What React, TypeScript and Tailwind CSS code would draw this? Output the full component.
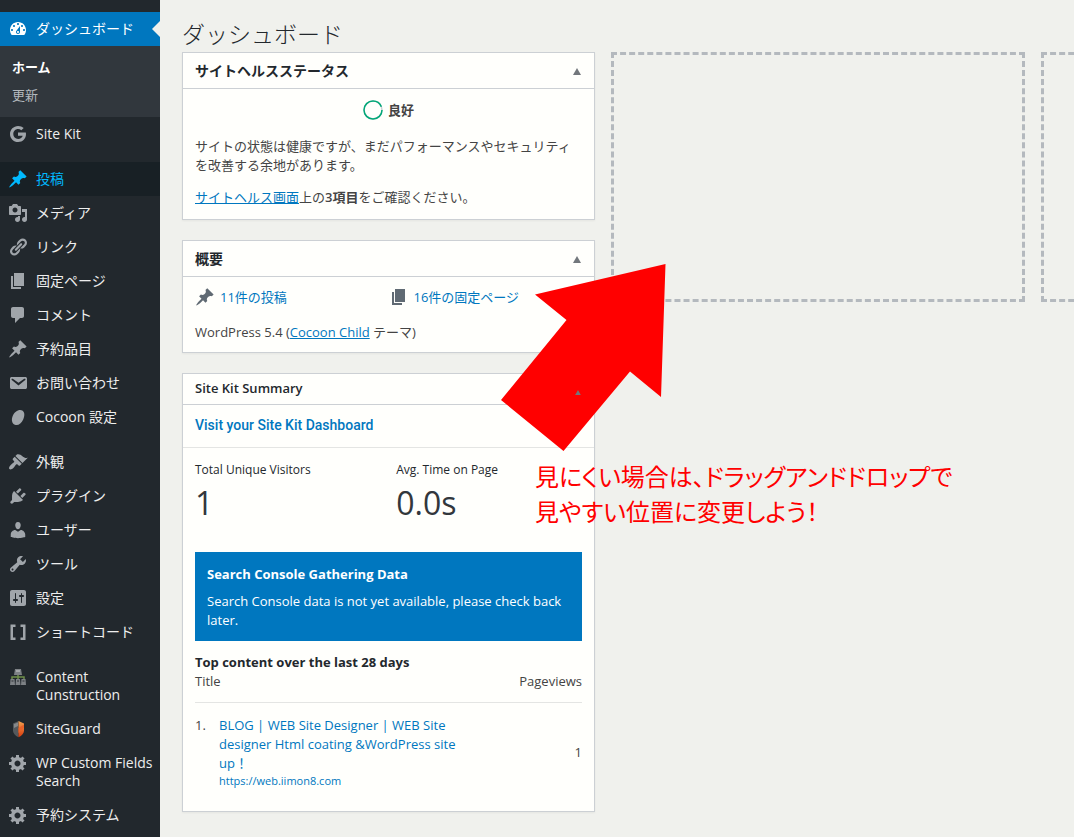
import type { ReactNode } from 'react';
import clsx from 'clsx';

const ICONS = {
  dashboard:
    'M3.76 16h12.48c1.1-1.37 1.76-3.11 1.76-5 0-4.42-3.58-8-8-8s-8 3.58-8 8c0 1.89.66 3.63 1.76 5zM10 4c.55 0 1 .45 1 1s-.45 1-1 1-1-.45-1-1 .45-1 1-1zM6 6c.55 0 1 .45 1 1s-.45 1-1 1-1-.45-1-1 .45-1 1-1zm8 0c.55 0 1 .45 1 1s-.45 1-1 1-1-.45-1-1 .45-1 1-1zm-5.37 5.55L12 7v6c0 1.1-.9 2-2 2s-2-.9-2-2c0-.57.24-1.08.63-1.45zM4 10c.55 0 1 .45 1 1s-.45 1-1 1-1-.45-1-1 .45-1 1-1zm12 0c.55 0 1 .45 1 1s-.45 1-1 1-1-.45-1-1 .45-1 1-1zm-5 3c0-.55-.45-1-1-1s-1 .45-1 1 .45 1 1 1 1-.45 1-1z',
  google:
    'M10 8.4v3.3h4.7c-.5 2-2.3 3.2-4.6 3.2-2.7 0-4.8-2.2-4.8-4.9s2.1-4.9 4.8-4.9c1.2 0 2.3.4 3.2 1.2l2.4-2.4C14.2 2.6 12.3 1.9 10.1 1.9 5.6 1.9 2 5.5 2 10s3.6 8.1 8.1 8.1c4.7 0 7.9-3.3 7.9-8 0-.6-.1-1.1-.2-1.7H10z',
  post: 'M10.44 3.02l1.82-1.82 6.36 6.35-1.83 1.82c-1.05-.68-2.48-.57-3.41.36l-.75.75c-.92.93-1.04 2.35-.35 3.41l-1.83 1.82-2.41-2.41-2.8 2.79c-.42.42-3.38 2.71-3.8 2.29s1.86-3.39 2.28-3.81l2.79-2.79L4.1 9.36l1.83-1.82c1.05.69 2.48.57 3.4-.36l.75-.75c.93-.92 1.05-2.35.36-3.41z',
  media:
    'M13 11V4c0-.55-.45-1-1-1h-1.67L9 1H5L3.67 3H2c-.55 0-1 .45-1 1v7c0 .55.45 1 1 1h10c.55 0 1-.45 1-1zM7 4.5c1.38 0 2.5 1.12 2.5 2.5S8.38 9.5 7 9.5 4.5 8.38 4.5 7 5.62 4.5 7 4.5zM14 6h5v10.5c0 1.38-1.12 2.5-2.5 2.5S14 17.88 14 16.5s1.12-2.5 2.5-2.5c.17 0 .34.02.5.05V9h-3V6zm-4 8.05V13h2v3.5c0 1.38-1.12 2.5-2.5 2.5S7 17.88 7 16.5 8.12 14 9.5 14c.17 0 .34.02.5.05z',
  links:
    'M17.74 2.76c1.68 1.69 1.68 4.41 0 6.1l-1.53 1.52c-1.12 1.12-2.7 1.47-4.14 1.09l2.62-2.61.76-.77.76-.76c.84-.84.84-2.2 0-3.04-.84-.85-2.2-.85-3.04 0l-.77.76-3.38 3.38c-.37-1.44-.02-3.02 1.1-4.14l1.52-1.53c1.69-1.68 4.42-1.68 6.1 0zM8.59 13.43l5.34-5.34c.42-.42.42-1.1 0-1.52-.44-.43-1.13-.39-1.53 0l-5.33 5.34c-.42.42-.42 1.1 0 1.52.44.43 1.13.39 1.52 0zm-.76 2.29l4.14-4.15c.38 1.44.03 3.02-1.09 4.14l-1.52 1.53c-1.69 1.68-4.41 1.68-6.1 0-1.68-1.68-1.68-4.42 0-6.1l1.53-1.52c1.12-1.12 2.7-1.47 4.14-1.1l-4.14 4.15c-.85.84-.85 2.2 0 3.05.84.84 2.2.84 3.04 0z',
  page: 'M6 15V2h10v13H6zm-1 1h8v2H3V5h2v11z',
  comments: 'M5 2h9c1.1 0 2 .9 2 2v7c0 1.1-.9 2-2 2h-2l-5 5v-5H5c-1.1 0-2-.9-2-2V4c0-1.1.9-2 2-2z',
  email:
    'M3.87 4h13.25C18.37 4 19 4.59 19 5.79v8.42c0 1.19-.63 1.79-1.88 1.79H3.87c-1.25 0-1.88-.6-1.88-1.79V5.79c0-1.2.63-1.79 1.88-1.79zm6.62 8.6l6.74-5.53c.24-.2.43-.66.13-1.07-.29-.41-.82-.42-1.17-.17l-5.7 3.86L4.8 5.83c-.35-.25-.88-.24-1.17.17-.3.41-.11.87.13 1.07z',
  cocoon: 'M14.3 3.6c2.4 1.4 2.7 5 .9 8.9-1.8 4.2-5.3 6.5-8.3 5.3-3-1.2-3.8-5-2.2-8.8 1.7-4.2 6.4-7.2 9.6-5.4z',
  appearance:
    'M14.48 11.06L7.41 3.99l1.5-1.5c.5-.56 2.3-.47 3.51.32 1.21.8 1.43 1.28 2.91 2.1 1.18.64 2.45 1.26 4.45.85zm-.71.71L6.7 4.7 4.93 6.47c-.39.39-.39 1.02 0 1.41l1.06 1.06c.39.39.39 1.03 0 1.42-.6.6-1.43 1.11-2.21 1.69-.35.26-.7.53-1.01.84C1.43 14.23.4 16.08 1.4 17.07c.99 1 2.84-.03 4.18-1.36.31-.31.58-.66.85-1.02.57-.78 1.08-1.61 1.69-2.21.39-.39 1.02-.39 1.41 0l1.06 1.06c.39.39 1.02.39 1.41 0z',
  plugins:
    'M13.11 4.36L9.87 7.6 8 5.73l3.24-3.24c.35-.34 1.05-.2 1.56.32.52.51.66 1.21.31 1.55zm-8 1.77l.91-1.12 9.01 9.01-1.19.84c-.71.71-2.63 1.16-3.82 1.16H6.14L4.9 17.26c-.59.59-1.54.59-2.12 0-.59-.58-.59-1.53 0-2.12l1.24-1.24v-3.88c0-1.13.4-3.19 1.09-3.89zm7.26 3.97l3.24-3.24c.34-.35 1.04-.21 1.55.31.52.51.66 1.21.31 1.55l-3.24 3.25z',
  users:
    'M10 9.25c-2.27 0-2.73-3.44-2.73-3.44C7 4.02 7.82 2 9.97 2c2.16 0 2.98 2.02 2.71 3.81 0 0-.41 3.44-2.68 3.44zm0 2.57L12.72 10c2.39 0 4.52 2.33 4.52 4.53v2.49s-3.65 1.13-7.24 1.13c-3.65 0-7.24-1.13-7.24-1.13v-2.49c0-2.25 1.94-4.48 4.47-4.48z',
  tools:
    'M16.68 9.77c-1.34 1.34-3.3 1.67-4.95.99l-5.41 6.52c-.99.99-2.59.99-3.58 0s-.99-2.59 0-3.57l6.52-5.42c-.68-1.65-.35-3.61.99-4.95 1.28-1.28 3.12-1.62 4.72-1.06l-2.89 2.89 2.82 2.82 2.86-2.87c.53 1.58.18 3.39-1.08 4.65zM3.81 16.21c.4.39 1.04.39 1.43 0 .4-.4.4-1.04 0-1.43-.39-.4-1.03-.4-1.43 0-.39.39-.39 1.03 0 1.43z',
  settings:
    'M18 16V4c0-1.1-.9-2-2-2H4c-1.1 0-2 .9-2 2v12c0 1.1.9 2 2 2h12c1.1 0 2-.9 2-2zM8 11h1c.55 0 1 .45 1 1s-.45 1-1 1H8v1.5c0 .28-.22.5-.5.5s-.5-.22-.5-.5V13H6c-.55 0-1-.45-1-1s.45-1 1-1h1V5.5c0-.28.22-.5.5-.5s.5.22.5.5V11zm5-2h-1c-.55 0-1-.45-1-1s.45-1 1-1h1V5.5c0-.28.22-.5.5-.5s.5.22.5.5V7h1c.55 0 1 .45 1 1s-.45 1-1 1h-1v5.5c0 .28-.22.5-.5.5s-.5-.22-.5-.5V9z',
  shortcode: 'M2.5 2.5h5V5H5v10.5h2.500V18h-5zM12.500 2.500h5V18h-5v-2.500H15V5h-2.500z',
  generic:
    'M18 12h-2.18c-.17.7-.44 1.35-.81 1.93l1.54 1.54-2.1 2.1-1.54-1.54c-.58.36-1.23.63-1.91.79V19H8v-2.18c-.68-.16-1.33-.43-1.91-.79l-1.54 1.54-2.12-2.12 1.54-1.54c-.36-.58-.63-1.23-.79-1.91H1V9.03h2.17c.16-.7.44-1.35.8-1.94L2.43 5.55l2.1-2.1 1.54 1.54c.58-.37 1.24-.64 1.93-.81V2h3v2.18c.68.16 1.33.43 1.91.79l1.54-1.54 2.12 2.12-1.54 1.54c.36.59.64 1.24.8 1.94H18V12zm-8.5 1.5c1.66 0 3-1.34 3-3s-1.34-3-3-3-3 1.34-3 3 1.34 3 3 3z',
};

type IconName = keyof typeof ICONS;

function Icon({ name, className }: { name: IconName; className?: string }) {
  return (
    <svg viewBox="0 0 20 20" className={clsx('h-5 w-5 shrink-0', className)} fill="currentColor" fillRule="evenodd" aria-hidden="true">
      <path d={ICONS[name]} />
    </svg>
  );
}

function SitemapIcon() {
  return (
    <svg viewBox="0 0 20 20" className="h-5 w-5 shrink-0" aria-hidden="true">
      <path d="M7 2h6l1 6H6z" fill="#7d8185" />
      <path d="M8 3h4v2H8z" fill="#a5a8aa" />
      <path d="M10 8v4M4 13v-3h12v3" fill="none" stroke="#6f8f4a" strokeWidth="1.5" />
      <path d="M2.5 12h4L7 18H2zM8 12h4l.5 6h-5zM13.5 12h4l.5 6h-5z" fill="#7d8185" />
      <path d="M3.5 13h2v2h-2zM9 13h2v2H9zM14.5 13h2v2h-2z" fill="#55595d" />
    </svg>
  );
}

function ShieldIcon() {
  return (
    <svg viewBox="0 0 20 20" className="h-5 w-5 shrink-0" aria-hidden="true">
      <defs>
        <linearGradient id="shieldRight" x1="0" y1="0" x2="0" y2="1">
          <stop offset="0" stopColor="#f0a050" />
          <stop offset="1" stopColor="#d93a0c" />
        </linearGradient>
      </defs>
      <path d="M10.5 2L5 4.5v7c0 3 2 5 5.500 6.800z" fill="#55595c" />
      <path d="M10 3.5L6 5v4l4-2z" fill="#85888a" />
      <path d="M10.5 2L16 4.5v7c0 3-2 5-5.500 6.800z" fill="url(#shieldRight)" />
      <path d="M10.5 9L16 5.500v3L10.500 14z" fill="#e8632a" />
    </svg>
  );
}

interface MenuItem {
  label: string;
  icon: ReactNode;
  active?: boolean;
}

const MENU_GROUPS: MenuItem[][] = [
  [{ label: 'Site Kit', icon: <Icon name="google" /> }],
  [
    { label: '投稿', icon: <Icon name="post" />, active: true },
    { label: 'メディア', icon: <Icon name="media" /> },
    { label: 'リンク', icon: <Icon name="links" /> },
    { label: '固定ページ', icon: <Icon name="page" /> },
    { label: 'コメント', icon: <Icon name="comments" /> },
    { label: '予約品目', icon: <Icon name="post" /> },
    { label: 'お問い合わせ', icon: <Icon name="email" /> },
    { label: 'Cocoon 設定', icon: <Icon name="cocoon" /> },
  ],
  [
    { label: '外観', icon: <Icon name="appearance" /> },
    { label: 'プラグイン', icon: <Icon name="plugins" /> },
    { label: 'ユーザー', icon: <Icon name="users" /> },
    { label: 'ツール', icon: <Icon name="tools" /> },
    { label: '設定', icon: <Icon name="settings" /> },
    { label: 'ショートコード', icon: <Icon name="shortcode" /> },
  ],
  [
    { label: 'Content Cunstruction', icon: <SitemapIcon /> },
    { label: 'SiteGuard', icon: <ShieldIcon /> },
    { label: 'WP Custom Fields Search', icon: <Icon name="generic" /> },
    { label: '予約システム', icon: <Icon name="generic" /> },
  ],
];

function Sidebar() {
  return (
    <nav className="w-40 shrink-0 bg-[#22282d] pt-3 text-sm leading-[18px] text-[#eeeeee]">
      <a href="#dashboard" className="relative flex items-start gap-2 bg-[#0077bf] py-2 pl-2 text-white">
        <Icon name="dashboard" className="-my-px" />
        ダッシュボード
        <svg viewBox="0 0 8 16" className="absolute top-[9px] right-0 h-4 w-2" aria-hidden="true">
          <path d="M8 0v16L0 8z" fill="#f0f1ed" />
        </svg>
      </a>
      <ul className="bg-[#31373d] pt-[7px] pb-2 text-[13px]">
        <li>
          <a href="#home" className="block px-3 py-[5px] font-bold text-white">ホーム</a>
        </li>
        <li>
          <a href="#updates" className="block px-3 py-[5px] text-[#b4b9be]">更新</a>
        </li>
      </ul>
      <div className="flex flex-col gap-[11px]">
        {MENU_GROUPS.map((group, i) => (
          <ul key={i}>
            {group.map((item) => (
              <li key={item.label}>
                <a
                  href="#menu"
                  className={clsx('flex items-start gap-2 py-2 pr-1 pl-2', item.active && 'bg-[#182025] text-[#00b9ff]')}
                >
                  <span className={clsx('-my-px', !item.active && 'text-[#a0a5aa]')}>{item.icon}</span>
                  <span>{item.label}</span>
                </a>
              </li>
            ))}
          </ul>
        ))}
      </div>
    </nav>
  );
}

interface PostboxProps {
  title: string;
  compact?: boolean;
  children: ReactNode;
}

function Postbox({ title, compact, children }: PostboxProps) {
  return (
    <section className="border border-[#ccd0d4] bg-[#fffffc] shadow-xs">
      <header
        className={clsx(
          'flex items-center justify-between border-b border-[#ccd0d4] px-3 text-[#23282d]',
          compact ? 'h-[31px] text-[13px] font-semibold' : 'h-9 text-sm font-bold'
        )}
      >
        <h2>{title}</h2>
        <button
          type="button"
          aria-label={title}
          className={clsx('relative z-20 p-px text-[#72777c]', compact ? 'mt-1.5' : 'mt-0.5')}
        >
          <svg viewBox="0 0 8 7" className={compact ? 'h-[5px] w-[6px]' : 'h-[7px] w-2'} fill="currentColor" aria-hidden="true">
            <path d="M4 0l4 7H0z" />
          </svg>
        </button>
      </header>
      {children}
    </section>
  );
}

function SiteHealth() {
  return (
    <Postbox title="サイトヘルスステータス">
      <div className="px-3 pt-[11px] pb-3 text-[13px] leading-[19px]">
        <div className="flex items-center justify-center gap-[5px] font-semibold">
          <svg viewBox="0 0 20 20" className="h-5 w-5" fill="none" strokeWidth="1.5" aria-hidden="true">
            <circle cx="10" cy="10" r="9" stroke="#ccd0d4" />
            <circle cx="10" cy="10" r="9" stroke="#00a878" pathLength="100" strokeDasharray="94 6" />
          </svg>
          良好
        </div>
        <p className="mt-[17px]">サイトの状態は健康ですが、まだパフォーマンスやセキュリティを改善する余地があります。</p>
        <p className="mt-[13px]">
          <a href="#health" className="text-[#0077bf] underline">サイトヘルス画面</a>
          上の<strong className="font-semibold">3項目</strong>をご確認ください。
        </p>
      </div>
    </Postbox>
  );
}

function AtAGlance() {
  return (
    <Postbox title="概要">
      <div className="px-3 py-[10px] text-[13px] leading-5">
        <ul className="grid grid-cols-2">
          <li>
            <a href="#posts" className="flex gap-[5px] text-[#0077bf]">
              <Icon name="post" className="text-[#606a73]" />
              11件の投稿
            </a>
          </li>
          <li>
            <a href="#pages" className="flex gap-[5px] text-[#0077bf]">
              <Icon name="page" className="text-[#606a73]" />
              16件の固定ページ
            </a>
          </li>
        </ul>
        <p className="mt-[15px]">
          WordPress 5.4 (<a href="#theme" className="text-[#0077bf] underline">Cocoon Child</a> テーマ)
        </p>
      </div>
    </Postbox>
  );
}

function SiteKitSummary() {
  return (
    <Postbox title="Site Kit Summary" compact>
      <p className="border-b border-[#e4e5e3] px-3 pt-[10px] pb-3 font-['Roboto',sans-serif] text-sm leading-5 font-medium">
        <a href="#sitekit" className="text-[#0077bf]">Visit your Site Kit Dashboard</a>
      </p>
      <div className="px-3 pt-[13px] pb-[10px]">
        <div className="flex text-[#23282d]">
          <div className="w-[52%]">
            <h3 className="text-xs leading-[18px]">Total Unique Visitors</h3>
            <p className="mt-1 text-[32px] leading-10 text-[#32373c]">1</p>
          </div>
          <div>
            <h3 className="text-xs leading-[18px]">Avg. Time on Page</h3>
            <p className="mt-1 text-[32px] leading-10 text-[#32373c]">0.0s</p>
          </div>
        </div>
        <div className="mt-[29px] bg-[#0077bf] px-3 pt-[13px] pb-[11px] leading-[19px] text-white">
          <h3 className="text-[13px] font-bold">Search Console Gathering Data</h3>
          <p className="mt-2 text-[13px]">Search Console data is not yet available, please check back later.</p>
        </div>
        <h3 className="mt-3 text-[13px] leading-[19px] font-bold text-[#23282d]">Top content over the last 28 days</h3>
        <table className="w-full text-[13px] leading-[19px]">
          <thead>
            <tr className="border-b border-[#e4e5e3]">
              <th className="pb-[11px] text-left font-medium">Title</th>
              <th className="pb-[11px] text-right font-medium">Pageviews</th>
            </tr>
          </thead>
          <tbody>
            <tr>
              <td className="pt-[13px] pb-3 pr-12 text-[#0077bf]">
                <div className="flex">
                  <span className="w-6 shrink-0 text-[#444444]">1.</span>
                  <div>
                    <a href="#blog" className="block">BLOG | WEB Site Designer | WEB Site designer Html coating &amp;WordPress site up！</a>
                    <a href="#url" className="block text-[11px] leading-4">https://web.iimon8.com</a>
                  </div>
                </div>
              </td>
              <td className="text-right">1</td>
            </tr>
          </tbody>
        </table>
      </div>
    </Postbox>
  );
}

export default function App() {
  return (
    <div
      lang="ja"
      className="flex min-h-screen bg-[#f0f1ed] font-['Open_Sans','Noto_Sans_CJK_JP',sans-serif] text-[#444444]"
    >
      <Sidebar />
      <main className="relative min-w-0 flex-1 overflow-hidden pt-[19px] pb-6 pl-[22px]">
        <h1 className="text-[23px] leading-[30px] font-light text-[#23282d]">ダッシュボード</h1>
        <div className="mt-[3px] grid grid-cols-[minmax(413px,1fr)_minmax(414px,1fr)_minmax(414px,1fr)] items-start gap-4">
          <div className="flex flex-col gap-5">
            <SiteHealth />
            <AtAGlance />
            <SiteKitSummary />
          </div>
          <div className="h-[250px] border-3 border-dashed border-[#b4b9be]" />
          <div className="h-[250px] border-3 border-dashed border-[#b4b9be]" />
        </div>

        {/* Red annotation laid over the widgets */}
        <svg
          viewBox="0 0 166 188"
          className="pointer-events-none absolute top-[264px] left-[341px] z-10 h-[188px] w-[166px]"
          aria-hidden="true"
        >
          <path d="M34 30.5L164.500 0 160 133 129 107.500 62.500 187 0 136 65.500 56z" fill="#ff0000" />
        </svg>
        <p className="pointer-events-none absolute top-[459px] left-[375px] z-10 text-[24px] leading-[35px] whitespace-nowrap text-[#ff0000] [font-feature-settings:'palt']">
          見にくい場合は、ドラッグアンドドロップで
          <br />
          見やすい位置に変更しよう！
        </p>
      </main>
    </div>
  );
}
